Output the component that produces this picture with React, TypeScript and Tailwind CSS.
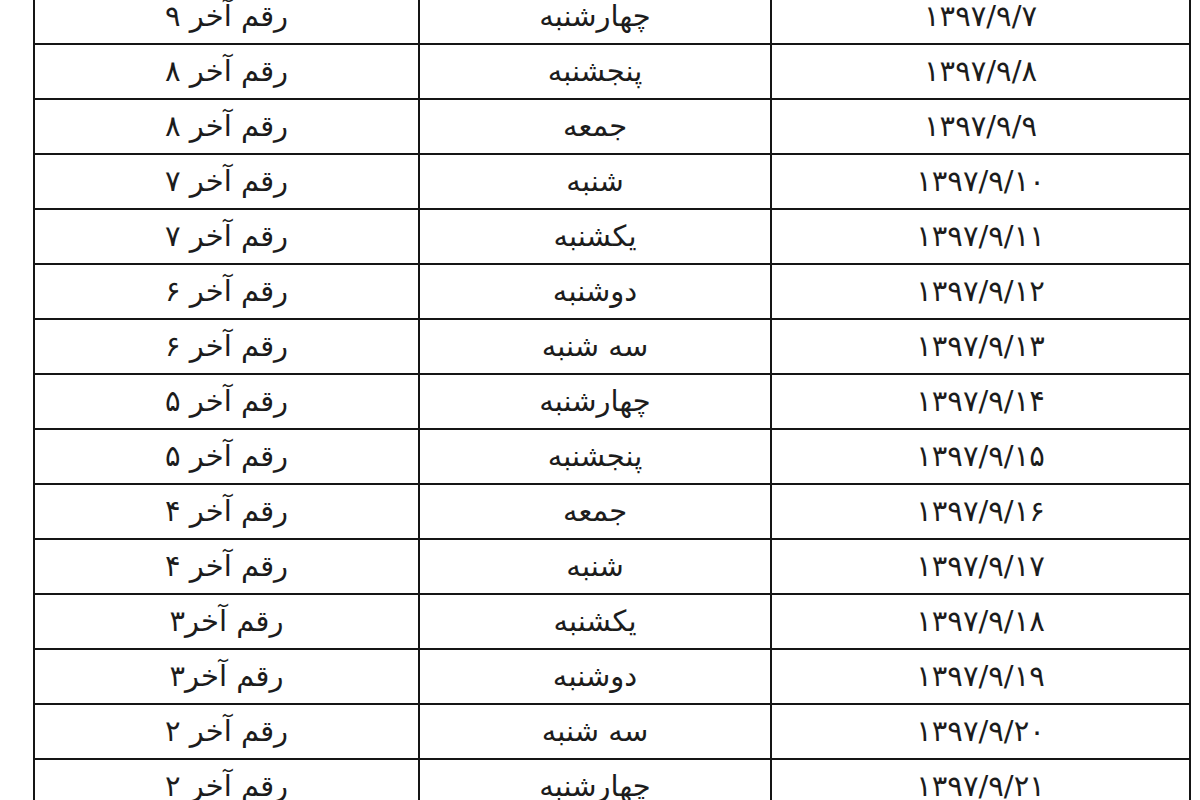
import React from "react";

const rows: [string, string, string][] = [
  ["رقم آخر ۹", "چهارشنبه", "۱۳۹۷/۹/۷"],
  ["رقم آخر ۸", "پنجشنبه", "۱۳۹۷/۹/۸"],
  ["رقم آخر ۸", "جمعه", "۱۳۹۷/۹/۹"],
  ["رقم آخر ۷", "شنبه", "۱۳۹۷/۹/۱۰"],
  ["رقم آخر ۷", "یکشنبه", "۱۳۹۷/۹/۱۱"],
  ["رقم آخر ۶", "دوشنبه", "۱۳۹۷/۹/۱۲"],
  ["رقم آخر ۶", "سه شنبه", "۱۳۹۷/۹/۱۳"],
  ["رقم آخر ۵", "چهارشنبه", "۱۳۹۷/۹/۱۴"],
  ["رقم آخر ۵", "پنجشنبه", "۱۳۹۷/۹/۱۵"],
  ["رقم آخر ۴", "جمعه", "۱۳۹۷/۹/۱۶"],
  ["رقم آخر ۴", "شنبه", "۱۳۹۷/۹/۱۷"],
  ["رقم آخر۳", "یکشنبه", "۱۳۹۷/۹/۱۸"],
  ["رقم آخر۳", "دوشنبه", "۱۳۹۷/۹/۱۹"],
  ["رقم آخر ۲", "سه شنبه", "۱۳۹۷/۹/۲۰"],
  ["رقم آخر ۲", "چهارشنبه", "۱۳۹۷/۹/۲۱"],
];

export default function App() {
  return (
    <div className="w-[1200px] h-[800px] overflow-hidden bg-white">
      <div className="ml-[33px] -mt-[12px] w-[1158px] grid grid-cols-[383px_350px_417px] auto-rows-[53px] gap-[2px] p-[2px] bg-[#151515]">
        {rows.map((r, i) => (
          <React.Fragment key={i}>
            {r.map((t, j) => (
              <div
                key={j}
                dir="rtl"
                className="bg-white flex items-center justify-center text-[29px] text-[#1c1c1c] font-['DejaVu_Sans',sans-serif]"
              >
                {t}
              </div>
            ))}
          </React.Fragment>
        ))}
      </div>
    </div>
  );
}
